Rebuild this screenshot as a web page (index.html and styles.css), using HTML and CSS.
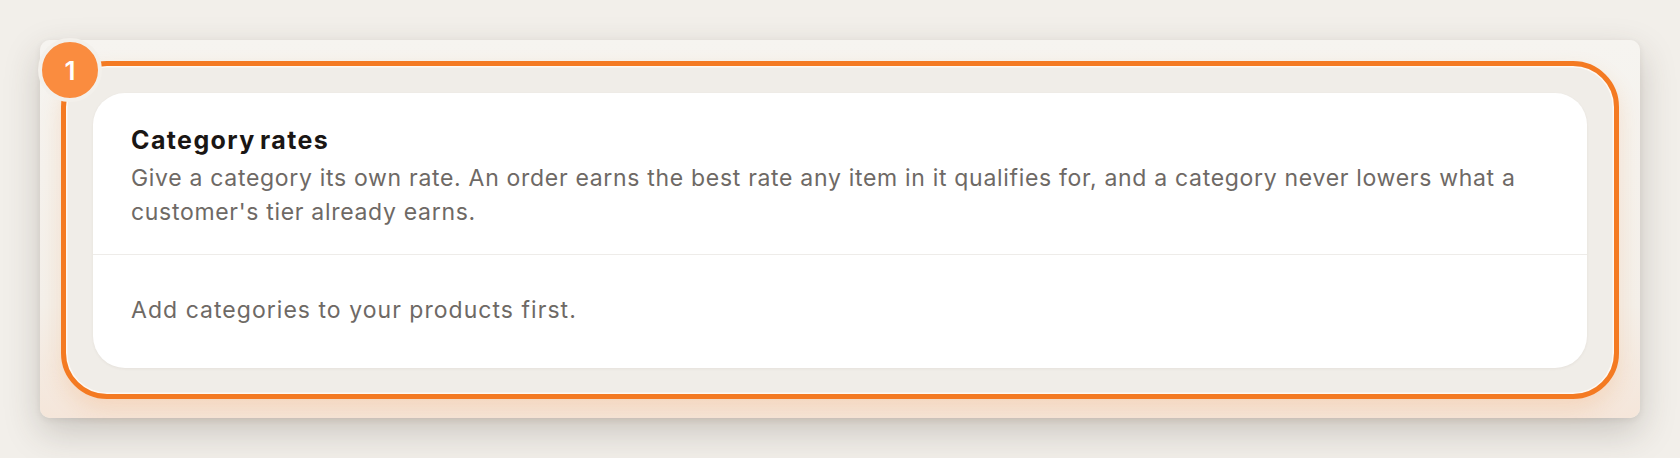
FILE: index.html
```html
<!DOCTYPE html>
<html lang="en">
<head>
<meta charset="utf-8">
<title>Category rates</title>
<link rel="stylesheet" href="styles.css">
</head>
<body>
<div class="panel">
  <div class="badge">1</div>
  <div class="highlight">
    <section class="card">
      <header class="card-head">
        <h2 class="title">Category rates</h2>
        <p class="desc">Give a category its own rate. An order earns the best rate any item in it qualifies for, and a category never lowers what a customer's tier already earns.</p>
      </header>
      <div class="card-empty">Add categories to your products first.</div>
    </section>
  </div>
</div>
</body>
</html>
```
FILE: styles.css
```css
html, body {
  margin: 0;
  padding: 0;
}
body {
  width: 1680px;
  height: 458px;
  background: #f2efea;
  font-family: Inter, "Noto Sans", "Liberation Sans", sans-serif;
  padding: 40px;
  box-sizing: border-box;
  overflow: hidden;
}
.panel {
  position: relative;
  width: 1600px;
  height: 378px;
  box-sizing: border-box;
  padding: 21px 21px 19px 21px;
  border-radius: 10px;
  background: linear-gradient(180deg, #f6f4f0 0%, #f4f0ea 70%, #f5e6da 100%);
  box-shadow: 0 14px 36px rgba(60, 50, 40, 0.22), 0 2px 6px rgba(60, 50, 40, 0.08);
}
.badge {
  position: absolute;
  top: -2px;
  left: -2px;
  width: 56px;
  height: 56px;
  border-radius: 50%;
  border: 4px solid #f3f0eb;
  background: #fa8c3f;
  color: #ffffff;
  font-size: 26px;
  font-weight: 600;
  display: flex;
  align-items: center;
  justify-content: center;
  z-index: 2;
}
.highlight {
  height: 100%;
  box-sizing: border-box;
  border: 5px solid #f47a22;
  border-radius: 46px;
  padding: 27px 27px 26px 27px;
  background: #f0ede8;
  box-shadow: 0 10px 22px rgba(244, 122, 34, 0.16), inset 0 0 0 1.5px rgba(255, 250, 244, 0.9);
}
.card {
  background: #ffffff;
  border-radius: 32px;
  height: 100%;
  box-sizing: border-box;
  box-shadow: 0 1px 3px rgba(60, 50, 40, 0.06);
  display: flex;
  flex-direction: column;
}
.card-head {
  padding: 33px 38px 25px 38px;
  border-bottom: 1.5px solid #eeece9;
}
.title {
  margin: 0 0 6px 0;
  font-size: 25px;
  line-height: 29px;
  font-weight: 700;
  color: #1a1614;
  letter-spacing: 0.056em;
  word-spacing: -3px;
}
.desc {
  margin: 0;
  font-size: 23px;
  line-height: 34px;
  font-weight: 400;
  color: #6e6965;
  letter-spacing: 0.03em;
}
.card-empty {
  padding: 38px 38px 0 38px;
  font-size: 23px;
  line-height: 34px;
  color: #6e6965;
  letter-spacing: 0.045em;
}
```
